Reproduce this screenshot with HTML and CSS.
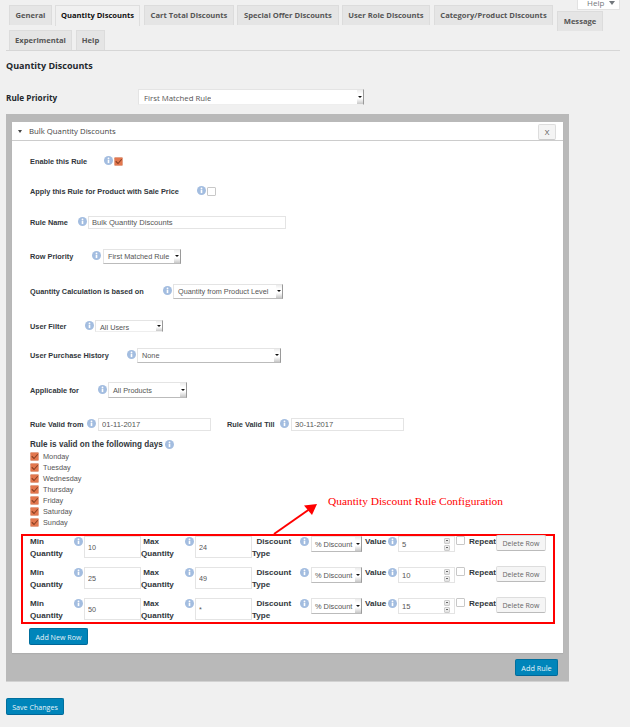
FILE: index.html
```html
<!DOCTYPE html>
<html lang="en">
<head>
<meta charset="utf-8">
<title>Quantity Discounts</title>
<link rel="stylesheet" href="styles.css">
</head>
<body>
<svg class="defs" width="0" height="0" aria-hidden="true">
  <symbol id="info" viewBox="0 0 18 18"><circle cx="9" cy="9" r="9" fill="#a3bde0"/><rect x="7.4" y="7.6" width="3.2" height="6.6" fill="#fff"/><circle cx="9" cy="4.9" r="1.8" fill="#fff"/></symbol>
  <symbol id="tick" viewBox="0 0 18 18"><rect x="0.5" y="0.5" width="17" height="17" rx="2" fill="#e3774e" stroke="#d9b6a6"/><path d="M3.5 8.5 L8 13 L15.5 4.5" fill="none" stroke="#8a3f22" stroke-width="2.2"/></symbol>
</svg>
<div class="help-tab">Help <span class="help-caret"></span></div>
<main class="wrap">
  <nav class="tabs">
    <div class="tab-row">
      <a class="tab t-general">General</a>
      <a class="tab active t-qty">Quantity Discounts</a>
      <a class="tab t-cart">Cart Total Discounts</a>
      <a class="tab t-offer">Special Offer Discounts</a>
      <a class="tab t-role">User Role Discounts</a>
      <a class="tab t-cat">Category/Product Discounts</a>
      <a class="tab t-msg">Message</a>
    </div>
    <div class="tab-row second">
      <a class="tab t-exp">Experimental</a>
      <a class="tab t-help">Help</a>
    </div>
  </nav>
  <h2 class="page-title">Quantity Discounts</h2>
  <div class="priority-row">
    <span class="priority-label">Rule Priority</span>
    <div class="select sel-priority clipped"><span>First Matched Rule</span><i class="arrow"></i></div>
  </div>

  <section class="panel">
    <div class="card">
      <header class="card-head">
        <span class="caret"></span>
        <span class="card-title">Bulk Quantity Discounts</span>
        <button class="close" type="button">X</button>
      </header>
      <div class="card-body">
        <div class="row m12"><label class="lbl w-enable">Enable this Rule</label><svg class="ic"><use href="#info"/></svg><svg class="cb on"><use href="#tick"/></svg></div>
        <div class="row m14"><label class="lbl w-apply">Apply this Rule for Product with Sale Price</label><svg class="ic"><use href="#info"/></svg><span class="cb"></span></div>
        <div class="row m15"><label class="lbl w-name">Rule Name</label><svg class="ic"><use href="#info"/></svg><input class="field f-name" value="Bulk Quantity Discounts"></div>
        <div class="row m18"><label class="lbl w-rowp">Row Priority</label><svg class="ic"><use href="#info"/></svg><div class="select sel-rowp"><span>First Matched Rule</span><i class="arrow"></i></div></div>
        <div class="row m19"><label class="lbl w-calc">Quantity Calculation is based on</label><svg class="ic"><use href="#info"/></svg><div class="select sel-calc"><span>Quantity from Product Level</span><i class="arrow"></i></div></div>
        <div class="row m19"><label class="lbl w-user">User Filter</label><svg class="ic"><use href="#info"/></svg><div class="select sel-user clipped"><span>All Users</span><i class="arrow"></i></div></div>
        <div class="row m13"><label class="lbl w-hist">User Purchase History</label><svg class="ic"><use href="#info"/></svg><div class="select sel-hist"><span>None</span><i class="arrow"></i></div></div>
        <div class="row m19"><label class="lbl w-appl">Applicable for</label><svg class="ic"><use href="#info"/></svg><div class="select sel-appl"><span>All Products</span><i class="arrow"></i></div></div>
        <div class="row m18">
          <label class="lbl w-from">Rule Valid from</label><svg class="ic"><use href="#info"/></svg><input class="field f-date" value="01-11-2017">
          <label class="lbl w-till">Rule Valid Till</label><svg class="ic"><use href="#info"/></svg><input class="field f-date" value="30-11-2017">
        </div>
        <div class="days-title"><span>Rule is valid on the following days</span><svg class="ic"><use href="#info"/></svg></div>
        <ul class="days">
          <li><svg class="cb on"><use href="#tick"/></svg>Monday</li>
          <li><svg class="cb on"><use href="#tick"/></svg>Tuesday</li>
          <li><svg class="cb on"><use href="#tick"/></svg>Wednesday</li>
          <li><svg class="cb on"><use href="#tick"/></svg>Thursday</li>
          <li><svg class="cb on"><use href="#tick"/></svg>Friday</li>
          <li><svg class="cb on"><use href="#tick"/></svg>Saturday</li>
          <li><svg class="cb on"><use href="#tick"/></svg>Sunday</li>
        </ul>
        <div class="qty-box">
          <div class="qty-row">
            <label class="qlbl">Min<br>Quantity</label><svg class="ic"><use href="#info"/></svg><input class="field qty" value="10">
            <label class="qlbl">&nbsp;Max<br>Quantity</label><svg class="ic"><use href="#info"/></svg><input class="field qty" value="24">
            <label class="qlbl">&nbsp;&nbsp;Discount<br>Type</label><svg class="ic"><use href="#info"/></svg><div class="select sel-type"><span>% Discount</span><i class="arrow"></i></div>
            <label class="qlbl val">Value</label><svg class="ic"><use href="#info"/></svg><div class="number"><span>5</span><i class="spin"></i><i class="spin"></i></div>
            <span class="cb"></span><label class="qlbl rep">Repeat</label><button class="btn-del" type="button">Delete Row</button>
          </div>
          <div class="qty-row">
            <label class="qlbl">Min<br>Quantity</label><svg class="ic"><use href="#info"/></svg><input class="field qty" value="25">
            <label class="qlbl">&nbsp;Max<br>Quantity</label><svg class="ic"><use href="#info"/></svg><input class="field qty" value="49">
            <label class="qlbl">&nbsp;&nbsp;Discount<br>Type</label><svg class="ic"><use href="#info"/></svg><div class="select sel-type"><span>% Discount</span><i class="arrow"></i></div>
            <label class="qlbl val">Value</label><svg class="ic"><use href="#info"/></svg><div class="number"><span>10</span><i class="spin"></i><i class="spin"></i></div>
            <span class="cb"></span><label class="qlbl rep">Repeat</label><button class="btn-del" type="button">Delete Row</button>
          </div>
          <div class="qty-row">
            <label class="qlbl">Min<br>Quantity</label><svg class="ic"><use href="#info"/></svg><input class="field qty" value="50">
            <label class="qlbl">&nbsp;Max<br>Quantity</label><svg class="ic"><use href="#info"/></svg><input class="field qty" value="*">
            <label class="qlbl">&nbsp;&nbsp;Discount<br>Type</label><svg class="ic"><use href="#info"/></svg><div class="select sel-type"><span>% Discount</span><i class="arrow"></i></div>
            <label class="qlbl val">Value</label><svg class="ic"><use href="#info"/></svg><div class="number"><span>15</span><i class="spin"></i><i class="spin"></i></div>
            <span class="cb"></span><label class="qlbl rep">Repeat</label><button class="btn-del" type="button">Delete Row</button>
          </div>
        </div>
        <button class="btn-primary add-row" type="button">Add New Row</button>
      </div>
    </div>
    <div class="panel-foot"><button class="btn-primary add-rule" type="button">Add Rule</button></div>
  </section>
  <button class="btn-primary save" type="button">Save Changes</button>
</main>
<svg class="callout-arrow" width="60" height="44" viewBox="0 0 60 44" aria-hidden="true">
  <path d="M2 40 L37 15.5" stroke="#f00" stroke-width="2" fill="none"/>
  <path d="M45 10 L32 11.5 L40 21 Z" fill="#f00"/>
</svg>
<div class="callout-text">Quantity Discount Rule Configuration</div>
</body>
</html>
```
FILE: styles.css
```css
* { box-sizing: border-box; }
html, body { margin: 0; height: 727px; overflow: hidden; }
body { background: #f0f0f0; font-family: "Liberation Sans", Arial, sans-serif; color: #32373c; position: relative; }
.defs { position: absolute; }

.help-tab { position: absolute; top: 0; left: 577px; width: 43px; height: 10px; background: #fff; border: 1px solid #e2e2e2; border-top: 0; font: 8px/6px "Open Sans", sans-serif; color: #72777c; padding-left: 9px; overflow: hidden; }
.help-caret { display: inline-block; border: 3px solid transparent; border-top: 4px solid #72777c; border-bottom: 0; margin-left: 3px; vertical-align: 1px; }

.wrap { padding: 5px 10px 0 6px; }

.tabs { border-bottom: 1px solid #d6d6d6; padding-left: 3px; height: 46px; }
.tab-row { display: flex; height: 20px; }
.tab-row.second { margin-top: 5px; }
.tab { display: block; height: 20px; background: #e5e5e5; border: 1px solid #dcdcdc; border-bottom: 0; font: 700 7.6px/19px "Open Sans", sans-serif; color: #555; text-align: center; white-space: nowrap; }
.tab.active { background: #f0f0f0; color: #111; height: 21px; position: relative; border-color: #dedede; }
.t-general { width: 43px; margin-right: 3px; }
.t-qty { width: 85px; margin-right: 4px; }
.t-cart { width: 90px; margin-right: 3px; }
.t-offer { width: 102px; margin-right: 3px; }
.t-role { width: 88px; margin-right: 4px; }
.t-cat { width: 119px; margin-right: 4px; }
.t-msg { width: 46px; margin-top: 6px; }
.t-exp { width: 63px; margin-right: 4px; }
.t-help { width: 29px; }

.page-title { margin: 9px 0 0; font: 700 9px/12px "Open Sans", sans-serif; color: #23282d; height: 12px; }
.priority-row { display: flex; margin-top: 17px; height: 16px; align-items: center; }
.priority-label { width: 132px; font: 700 8.2px/12px "Open Sans", sans-serif; color: #23282d; position: relative; top: 1px; }

.select { display: flex; align-items: center; justify-content: space-between; background: #fff; border: 1px solid #e4e4e4; border-right: 1px solid #9a9a9a; border-bottom-color: #bbb; font-size: 7.3px; color: #555; padding-left: 4px; white-space: nowrap; overflow: hidden; position: relative; }
.arrow { width: 6px; align-self: stretch; background: linear-gradient(#ededed, #fff 30%, #fff 60%, #c8c8c8); position: relative; flex: none; }
.arrow::after { content: ""; position: absolute; left: 1px; top: 50%; margin-top: -1px; border: 2px solid transparent; border-top: 2.5px solid #111; border-bottom: 0; }
.clipped { border-bottom-color: #eee; }
.clipped > span { position: relative; top: 4px; }
.sel-priority { width: 226px; height: 16px; padding-left: 5px; font-family: "Open Sans", sans-serif; font-size: 7.8px; }
.sel-priority > span { top: 1px; display: block; height: 10px; line-height: 11px; overflow: hidden; }
.sel-rowp { width: 78px; height: 15px; margin-left: 1px; }
.sel-calc { width: 110px; height: 15px; }
.sel-user { width: 68px; height: 12px; }
.sel-user > span { top: 1px; }
.sel-hist { width: 144px; height: 15px; }
.sel-appl { width: 79px; height: 16px; }
.sel-type { width: 51px; height: 16px; font-size: 7.4px; padding-left: 3px; }

.panel { margin-top: 9px; background: #b9b9b9; border-bottom: 1px solid #d2d2d2; padding: 8px 6px 0; width: 563px; height: 568px; }
.card { background: #fff; height: 531px; box-shadow: 0 1px 1px rgba(0,0,0,.06); }
.card-head { display: flex; align-items: center; height: 19px; border-bottom: 1px solid #ccc; padding: 0 7px 0 6px; }
.caret { width: 0; height: 0; border: 2.5px solid transparent; border-top: 3px solid #444; border-bottom: 0; margin-right: 7px; }
.card-title { flex: 1; font: 7.75px/12px "Open Sans", sans-serif; color: #444; }
.close { width: 18px; height: 16px; padding: 0; background: #f4f4f4; border: 1px solid #ddd; border-bottom-color: #ccc; border-radius: 2px; font: 8px/12px "Open Sans", sans-serif; color: #555; margin-top: 1px; }

.card-body { padding: 0 0 0 18px; }
.row { display: flex; align-items: center; height: 16px; }
.m12 { margin-top: 12px; } .m13 { margin-top: 13px; } .m14 { margin-top: 14px; }
.m15 { margin-top: 15px; } .m18 { margin-top: 18px; } .m19 { margin-top: 19px; }
.lbl { font-weight: 700; font-size: 7.35px; color: #32373c; white-space: nowrap; position: relative; }
.ic { width: 9px; height: 9px; flex: none; position: relative; top: -1px; }
.cb { width: 9px; height: 9px; flex: none; background: #fff; border: 1px solid #c8c8c8; border-radius: 1px; display: block; }
.cb.on { border: 0; }
.row .cb { margin-left: 1px; }
.w-enable { width: 74px; } .w-apply { width: 167px; } .w-name { width: 48px; }
.w-rowp { width: 62px; } .w-calc { width: 133px; } .w-user { width: 55px; }
.w-hist { width: 97px; } .w-appl { width: 68px; } .w-from { width: 57px; }
.w-till { width: 53px; margin-left: 16px; }
.row .ic { margin-right: 1px; }
.row .ic + .cb { margin-left: 0; }
.field { background: #fff; border: 1px solid #e4e4e4; padding: 0 2px; margin: 0; font: 7.6px "Liberation Sans", sans-serif; color: #555; outline: 0; display: block; border-radius: 0; }
.f-name { width: 198px; height: 13px; padding-left: 3px; }
.f-date { width: 113px; height: 13px; margin-left: 1px; padding-left: 3px; }

.days-title { display: flex; align-items: center; height: 12px; margin-top: 6px; font-weight: 700; font-size: 8.15px; color: #32373c; }
.days-title .ic { margin-left: 2px; top: 0; }
.days { list-style: none; margin: 1px 0 0; padding: 0; }
.days li { display: flex; align-items: center; height: 11px; font-size: 7.3px; color: #555; }
.days .cb { margin-right: 4px; }

.qty-box { margin: 6px 0 0 -9px; width: 534px; height: 90px; border: 2px solid #f00; padding: 0 0 2px 7px; display: flex; flex-direction: column; gap: 9px; }
.qty-row { display: grid; grid-template-columns: 44px 10px 57px 44px 10px 57px 48px 11px 51px 3px 23px 10px 58px 13px 27px 50px; height: 22px; align-items: start; }
.qlbl { font-weight: 700; font-size: 8.1px; line-height: 12px; color: #32373c; white-space: nowrap; }
.qty-row .ic { margin-top: 1px; top: 0; }
.qty-row .field.qty { width: 57px; height: 22px; padding-left: 3px; font-size: 7.2px; }
.qty-row .select { grid-column: 9; }
.qty-row .val { grid-column: 11; margin-top: 0; }
.number { width: 57px; height: 16px; background: #fff; border: 1px solid #e4e4e4; font-size: 7.6px; color: #555; padding-left: 3px; display: grid; grid-template-columns: 42px 6px; grid-template-rows: 7px 7px; align-items: center; }
.number > span { grid-row: 1 / 3; }
.spin { grid-column: 2; width: 6px; height: 6px; border: 1px solid #ccc; background: linear-gradient(#f2f2f2, #e2e2e2); border-radius: 1px; display: block; position: relative; }
.spin::after { content: ""; position: absolute; left: 1px; top: 1.5px; width: 2px; height: 1px; background: #666; }
.qty-row .cb { margin-left: 0; }
.rep { margin-top: 0; }
.btn-del { width: 50px; height: 16px; padding: 0; margin-top: -1px; background: #f5f5f5; border: 1px solid #ddd; border-bottom-color: #bbb; border-radius: 2px; font: 7px "Open Sans", sans-serif; color: #666; white-space: nowrap; }

.btn-primary { display: block; padding: 0; background: #0085ba; border: 1px solid #006f9d; border-bottom-color: #006799; border-radius: 2px; color: #e6f3f9; font: 7.1px/12px "Open Sans", sans-serif; white-space: nowrap; }
.add-row { width: 59px; height: 17px; margin: 4px 0 0 -1px; }
.panel-foot { display: flex; justify-content: flex-end; padding: 6px 5px 0 0; }
.add-rule { width: 43px; height: 17px; font-size: 7.3px; }
.save { width: 58px; height: 17px; margin-top: 16px; }

.callout-arrow { position: absolute; left: 272px; top: 494px; }
.callout-text { position: absolute; left: 328px; top: 494px; font: 11.4px/14px "Liberation Serif", serif; color: #f00; white-space: nowrap; }
```
